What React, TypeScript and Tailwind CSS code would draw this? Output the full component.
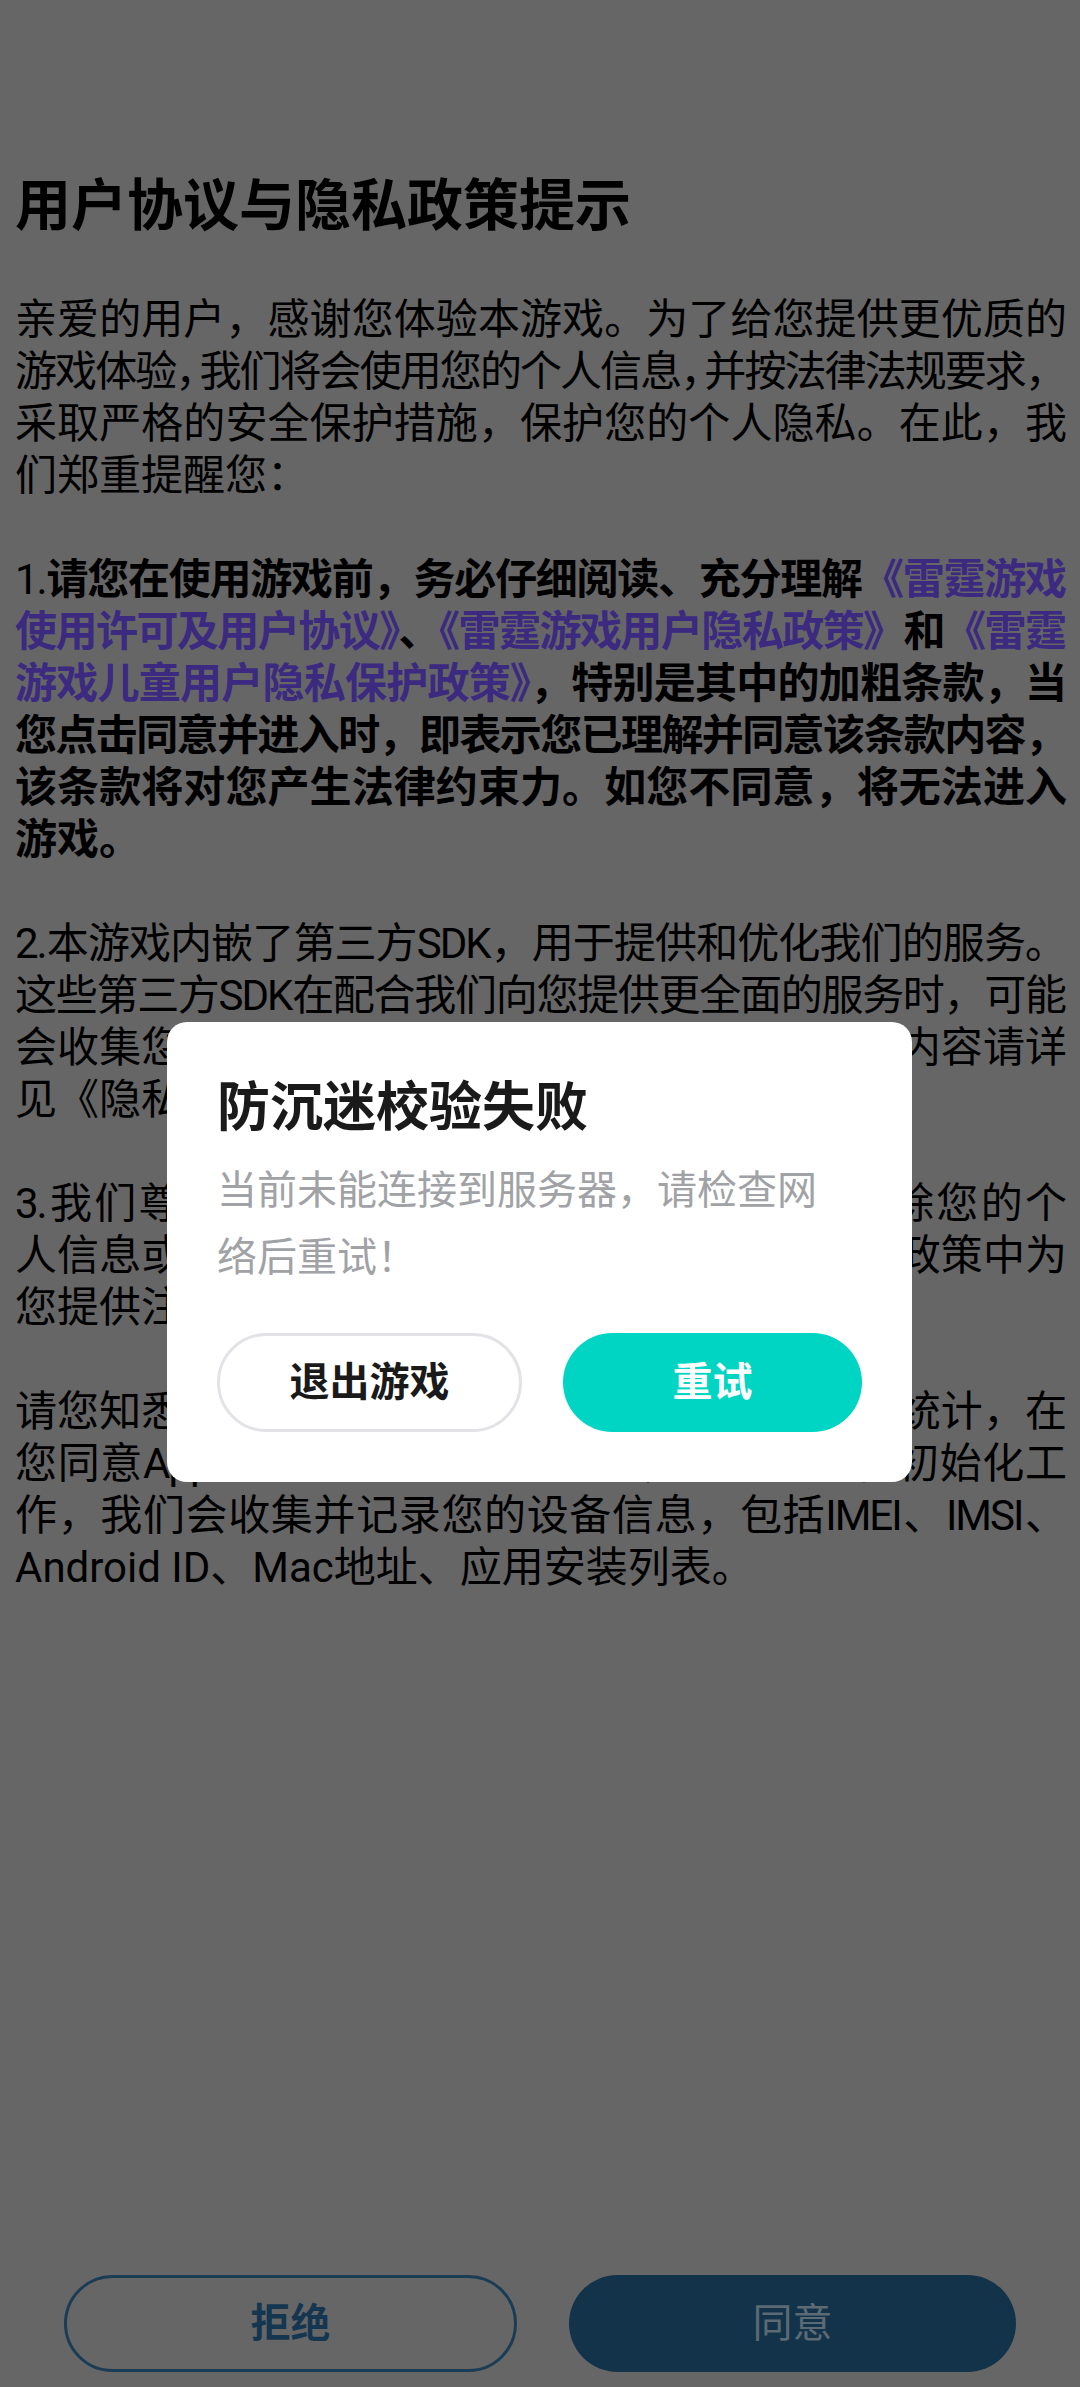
import clsx from "clsx";

const PURPLE = "text-[#3b2a80]";

function Line({
  children,
  last = false,
  className,
}: {
  children: React.ReactNode;
  last?: boolean;
  className?: string;
}) {
  return (
    <div
      className={clsx(
        "whitespace-nowrap",
        !last && "text-justify [text-align-last:justify] tracking-[-2px]",
        className
      )}
    >
      {children}
    </div>
  );
}

function Gap() {
  return <div className="h-[52px]" />;
}

function Link({ children }: { children: React.ReactNode }) {
  return <span className={PURPLE}>{children}</span>;
}

// narrow comma, as the phone's font squeezes some punctuation
function Comma() {
  return <span className="tracking-[-18px]">，</span>;
}

function AntiAddictionDialog() {
  return (
    <div className="absolute left-[167px] top-[1022px] flex h-[460px] w-[745px] flex-col rounded-[20px] bg-white px-[50px] pt-[52px]">
      <h2 className="text-[53px] font-bold leading-[69px] text-[#1a1a1a]">
        防沉迷校验失败
      </h2>
      <p className="mt-[14px] text-[40px] leading-[67px] text-[#a0a2a6]">
        当前未能连接到服务器，请检查网
        <br />
        络后重试！
      </p>
      <div className="mt-[42px] flex gap-[41px]">
        <button className="flex h-[99px] flex-1 items-center justify-center rounded-full border-[3px] border-[#e3e3e7] bg-white text-[40px] font-bold text-[#1a1a1a]">
          退出游戏
        </button>
        <button className="flex h-[99px] flex-1 items-center justify-center rounded-full bg-[#00d5c3] text-[40px] font-bold text-white">
          重试
        </button>
      </div>
    </div>
  );
}

export default function App() {
  return (
    <div className="relative flex min-h-[2387px] w-[1080px] flex-col bg-[#666666] font-['Roboto','Noto_Sans_CJK_SC',sans-serif] text-black">
      <h1 className="mt-[170px] px-[15px] text-[56px] font-bold leading-[72px]">
        用户协议与隐私政策提示
      </h1>

      <div className="mt-[52px] px-[15px] text-[42px] leading-[52px]">
        <Line>亲爱的用户，感谢您体验本游戏。为了给您提供更优质的</Line>
        <Line>
          游戏体验<Comma />我们将会使用您的个人信息<Comma />并按法律法规要求，
        </Line>
        <Line>采取严格的安全保护措施，保护您的个人隐私。在此，我</Line>
        <Line last>们郑重提醒您：</Line>
        <Gap />

        <div className="font-bold">
          <Line>
            <span className="font-normal">1.</span>
            请您在使用游戏前，务必仔细阅读、充分理解<Link>《雷霆游戏</Link>
          </Line>
          <Line>
            <Link>使用许可及用户协议》</Link>、<Link>《雷霆游戏用户隐私政策》</Link>和
            <Link>《雷霆</Link>
          </Line>
          <Line>
            <Link>游戏儿童用户隐私保护政策》</Link>，特别是其中的加粗条款，当
          </Line>
          <Line>您点击同意并进入时，即表示您已理解并同意该条款内容，</Line>
          <Line>该条款将对您产生法律约束力。如您不同意，将无法进入</Line>
          <Line last>游戏。</Line>
        </div>
        <Gap />

        <Line>2.本游戏内嵌了第三方SDK，用于提供和优化我们的服务。</Line>
        <Line>这些第三方SDK在配合我们向您提供更全面的服务时，可能</Line>
        <Line>会收集您的个人信息，具体收集信息类型及用途内容请详</Line>
        <Line last>见《隐私政策》中的第三方SDK列表。</Line>
        <Gap />

        <Line>3.我们尊重您的权利，您可以访问、更正或删除您的个</Line>
        <Line>人信息或撤回授权同意，具体方式我们会在隐私政策中为</Line>
        <Line last>您提供注销账号的途径。</Line>
        <Gap />

        <Line>请您知悉，为了保障游戏正常运行以及进行数据统计，在</Line>
        <Line>您同意App用户协议及隐私政策后，我们将进行初始化工</Line>
        <Line>作，我们会收集并记录您的设备信息，包括IMEI、IMSI、</Line>
        <Line last>Android ID、Mac地址、应用安装列表。</Line>
      </div>

      <div className="mt-auto flex gap-[52px] px-[64px] pb-[15px]">
        <button className="flex h-[97px] flex-1 items-center justify-center rounded-full border-[3px] border-[#1a3d55] text-[40px] font-bold text-[#143650]">
          拒绝
        </button>
        <button className="flex h-[97px] flex-1 items-center justify-center rounded-full bg-[#12334a] text-[40px] text-[#5c6a74]">
          同意
        </button>
      </div>

      <AntiAddictionDialog />
    </div>
  );
}
